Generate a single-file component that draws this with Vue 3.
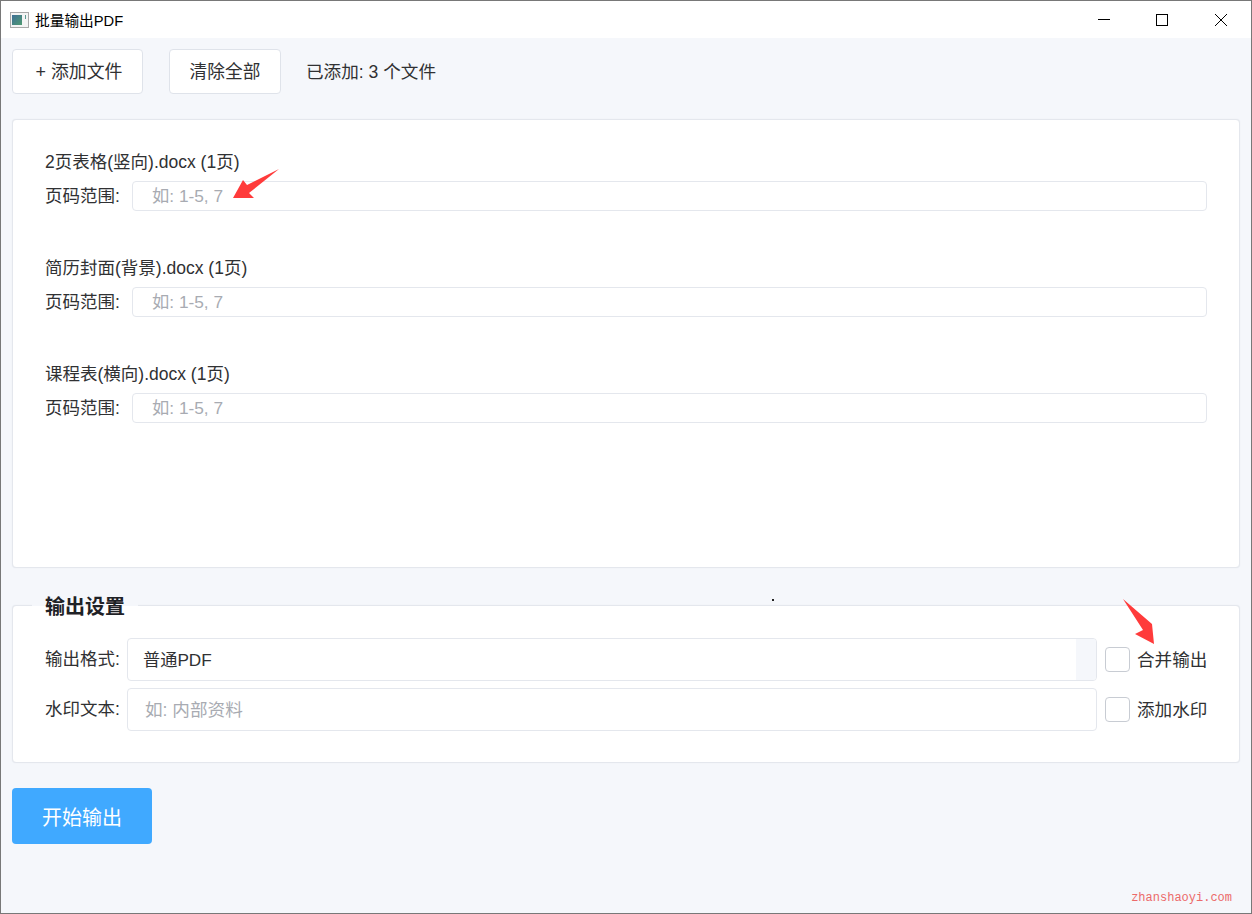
<script setup>
const files = [
  { id: 1, name: '2页表格(竖向).docx (1页)' },
  { id: 2, name: '简历封面(背景).docx (1页)' },
  { id: 3, name: '课程表(横向).docx (1页)' },
]
</script>

<template>
  <div class="window">
    <header class="titlebar">
      <svg class="app-icon" width="19" height="16" viewBox="0 0 19 16">
        <rect x="0.5" y="0.5" width="18" height="15" fill="#f4f4f4" stroke="#a9a9a9" />
        <defs>
          <linearGradient id="ic" x1="0" y1="0" x2="1" y2="1">
            <stop offset="0" stop-color="#3f6f96" />
            <stop offset="1" stop-color="#4f9a72" />
          </linearGradient>
        </defs>
        <rect x="2" y="3" width="10" height="10" fill="url(#ic)" />
        <rect x="15" y="3" width="1" height="4" fill="#5d9a92" />
      </svg>
      <span class="title">批量输出PDF</span>
      <div class="controls">
        <svg class="ctl" width="14" height="14" viewBox="0 0 14 14"><path d="M1 6.5H13" stroke="#000" fill="none" /></svg>
        <svg class="ctl" width="14" height="14" viewBox="0 0 14 14"><rect x="1.5" y="1.5" width="11" height="11" stroke="#000" fill="none" /></svg>
        <svg class="ctl ctl-close" width="14" height="14" viewBox="0 0 14 14"><path d="M1 1L13 13M13 1L1 13" stroke="#000" fill="none" /></svg>
      </div>
    </header>

    <main class="content">
      <div class="toolbar">
        <button class="btn add">+ 添加文件</button>
        <button class="btn clear">清除全部</button>
        <span class="count">已添加: 3 个文件</span>
      </div>

      <section class="panel files">
        <div v-for="f in files" :key="f.id" class="file">
          <div class="file-name">{{ f.name }}</div>
          <div class="file-range">
            <span class="range-label">页码范围:</span>
            <input class="range-input" placeholder="如: 1-5, 7" />
          </div>
        </div>
      </section>

      <section class="panel settings">
        <div class="legend">输出设置</div>
        <div class="row">
          <span class="row-label">输出格式:</span>
          <div class="field select">
            <span class="select-value">普通PDF</span>
            <span class="select-arrow"></span>
          </div>
          <label class="check"><span class="box"></span><span class="check-text">合并输出</span></label>
        </div>
        <div class="row">
          <span class="row-label">水印文本:</span>
          <input class="field text" placeholder="如: 内部资料" />
          <label class="check"><span class="box"></span><span class="check-text">添加水印</span></label>
        </div>
      </section>

      <button class="start">开始输出</button>
    </main>

    <svg class="arrow arrow-a" width="48" height="34" viewBox="0 0 48 34">
      <path d="M1 31L11 13L15 18L47 2L17 26L22 31Z" fill="#ff3b3b" />
    </svg>
    <svg class="arrow arrow-b" width="34" height="48" viewBox="0 0 34 48">
      <path d="M1 1L30 26L32 46L13 36L21 32Z" fill="#ff3b3b" />
    </svg>
    <span class="speck"></span>
    <span class="mark">zhanshaoyi.com</span>
  </div>
</template>

<style>
html, body { margin: 0; background: #f5f7fb; }
</style>

<style scoped>
.window {
  position: relative;
  width: 1252px;
  height: 914px;
  box-sizing: border-box;
  border: 1px solid #787878;
  display: flex;
  flex-direction: column;
  background: #f5f7fb;
  font-family: "Liberation Sans", "Noto Sans CJK SC", sans-serif;
  color: #303133;
  overflow: hidden;
}
.titlebar {
  height: 37px;
  flex: none;
  background: #fff;
  display: flex;
  align-items: center;
  padding-left: 9px;
  box-sizing: border-box;
}
.app-icon { flex: none; }
.title { margin-left: 6px; font-size: 14.7px; color: #000; margin-bottom: 1px; }
.controls { margin-left: auto; display: flex; gap: 44px; padding-right: 23px; }
.ctl { display: block; }
.ctl-close { margin-left: 1px; }
.content {
  flex: 1;
  padding: 11px 11px 0;
  display: flex;
  flex-direction: column;
  align-items: stretch;
}
.toolbar { display: flex; align-items: center; height: 45px; }
.btn {
  height: 45px;
  box-sizing: border-box;
  background: #fff;
  border: 1px solid #dfe3ea;
  border-radius: 4px;
  font: inherit;
  font-size: 17.7px;
  color: #303133;
  padding: 0 0 3px;
}
.add { width: 131px; padding-left: 3px; font-size: 17.9px; }
.clear { width: 112px; margin-left: 26px; }
.count { margin-left: 25px; font-size: 17.6px; margin-bottom: 3px; }
.panel {
  background: #fff;
  border: 1px solid #e4e7ed;
  border-radius: 4px;
  box-sizing: border-box;
  box-shadow: 0 0 1px #dfe3ea;
}
.files { margin-top: 25px; height: 449px; padding: 30px 32px 0; }
.file { height: 106px; }
.file-name { font-size: 17.5px; line-height: 24px; height: 24px; }
.file-range { display: flex; align-items: center; margin-top: 7px; }
.range-label { width: 87px; flex: none; font-size: 17.5px; margin-bottom: 4px; }
.range-input {
  flex: 1;
  min-width: 0;
  height: 30px;
  box-sizing: border-box;
  border: 1px solid #e4e7ed;
  border-radius: 4px;
  padding: 0 19px;
  font: inherit;
  font-size: 17.3px;
  outline: none;
}
.range-input::placeholder { color: #a8abb2; }
.settings {
  position: relative;
  margin-top: 37px;
  height: 158px;
  padding: 32px 32px 0;
}
.legend {
  position: absolute;
  left: 19px;
  top: -11px;
  padding: 0 13px;
  height: 24px;
  line-height: 24px;
  font-size: 20px;
  font-weight: 700;
  color: #1f2226;
  background: linear-gradient(#f5f7fb 0 11px, #fff 11px);
}
.row { display: flex; align-items: center; height: 43px; margin-bottom: 7px; }
.row-label { width: 82px; flex: none; font-size: 17.5px; margin-bottom: 4px; }
.field {
  flex: 1;
  min-width: 0;
  height: 43px;
  box-sizing: border-box;
  border: 1px solid #e4e7ed;
  border-radius: 4px;
  background: #fff;
  font: inherit;
  font-size: 17.6px;
  color: #303133;
}
.select { display: flex; align-items: stretch; overflow: hidden; }
.select-value { flex: 1; font-size: 17.2px; line-height: 41px; padding-left: 15px; padding-top: 1px; box-sizing: border-box; }
.select-arrow { width: 20px; background: #f5f7fb; }
.text { padding: 2px 17px 0; outline: none; }
.text::placeholder { color: #a8abb2; }
.check {
  width: 110px;
  flex: none;
  padding-left: 8px;
  box-sizing: border-box;
  display: flex;
  align-items: center;
  font-size: 17.6px;
  white-space: nowrap;
}
.check-text { margin-bottom: 3px; }
.box {
  width: 25px;
  height: 25px;
  box-sizing: border-box;
  border: 1px solid #c8ccd3;
  border-radius: 4px;
  background: #fff;
  margin-right: 7px;
  flex: none;
}
.start {
  align-self: flex-start;
  margin-top: 25px;
  width: 140px;
  height: 56px;
  border: none;
  border-radius: 4px;
  background: #40a9ff;
  color: #fff;
  font: inherit;
  font-size: 20px;
  padding: 0;
}
.arrow { position: absolute; }
.arrow-a { left: 231px; top: 166px; }
.arrow-b { left: 1121px; top: 597px; }
.speck { position: absolute; left: 771px; top: 598px; width: 2px; height: 2px; background: #222; }
.mark {
  position: absolute;
  right: 19px;
  top: 890px;
  font-family: "Liberation Mono", monospace;
  font-size: 12px;
  line-height: 14px;
  color: #ec6a6a;
}
</style>
